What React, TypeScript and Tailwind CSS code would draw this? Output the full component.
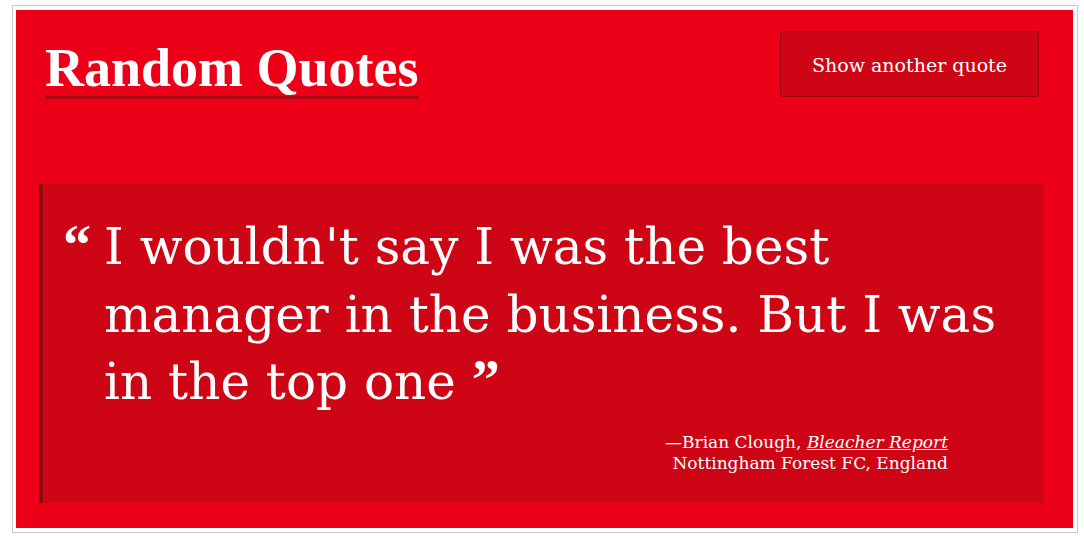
export default function App() {
  return (
    <div className="min-h-screen bg-white pl-[12px] pt-[5px] font-['DejaVu_Serif',serif]">
      <div className="h-[528px] w-[1066px] border border-[#c9c9c9] pb-[4px] pl-[3px] pr-[4px] pt-[4px]">
        <main className="h-full bg-[#ec0018] pl-[23px] pr-[29px] pt-[21px] text-white">
          <header className="flex items-start justify-between pl-[6px] pr-[5px]">
            <h1 className="mt-[10px] border-b-[3px] border-[#b00512] pb-[1px] font-['Liberation_Serif',serif] text-[54px] font-bold leading-none">
              Random Quotes
            </h1>
            <button
              type="button"
              className="h-[66px] w-[259px] rounded-[3px] border border-[#a1000e] bg-[#cd0515] pt-[2px] text-[19px] text-white"
            >
              Show another quote
            </button>
          </header>

          <blockquote className="mt-[85px] border-l-4 border-[#8a0a10] bg-[#cd0515] pb-[29px] pl-[20px] pt-[28px]">
            <div className="flex items-baseline">
              <span className="w-[41px] shrink-0 font-['Liberation_Serif',serif] text-[56px] font-bold leading-[67.5px]">
                &ldquo;
              </span>
              <p className="w-[920px] text-[50px] leading-[67.5px]">
                I wouldn't say I was the best manager in the business. But I was in the top one{" "}
                <span className="font-['Liberation_Serif',serif] text-[56px] font-bold leading-none">
                  &rdquo;
                </span>
              </p>
            </div>
            <footer className="mt-[15px] pr-[96px] text-right text-[17px] leading-[21px]">
              <div>
                &mdash;Brian Clough, <cite className="underline">Bleacher Report</cite>
              </div>
              <div>Nottingham Forest FC, England</div>
            </footer>
          </blockquote>
        </main>
      </div>
    </div>
  );
}
